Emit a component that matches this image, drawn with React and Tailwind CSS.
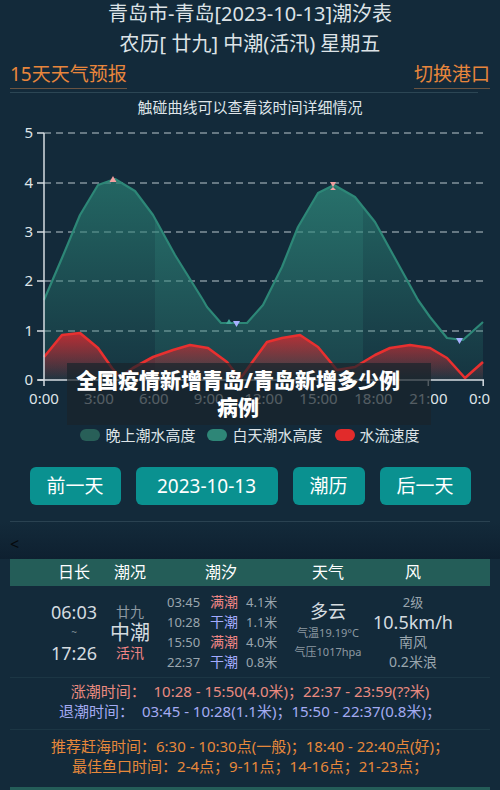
import React from 'react';

const tide = [
    [44, 300], [62, 258], [80, 215], [98, 185], [115, 179], [135, 191], [153, 215], [175, 255],
    [203, 300], [207, 307], [221, 323], [247, 323], [263, 305], [282, 267], [298, 227], [318, 193],
    [334, 185], [355, 197], [375, 222], [407, 280], [418, 300], [430, 317], [447, 338], [463, 340], [483, 322],
];

const flow = [
    [44, 357], [62, 335], [80, 333], [98, 348], [112, 368], [120, 377], [133, 368], [153, 357],
    [173, 350], [190, 345], [208, 348], [227, 362], [240, 379], [267, 342], [282, 338], [300, 335],
    [318, 347], [337, 370], [355, 367], [375, 355], [390, 348], [410, 345], [430, 348], [447, 358],
    [465, 378], [483, 362],
];

const line = (pts) => pts.map((p, i) => `${i ? 'L' : 'M'}${p[0]},${p[1]}`).join(' ');
const area = (pts) => `${line(pts)} L${pts[pts.length - 1][0]},380 L${pts[0][0]},380 Z`;

const yTicks = [[5, 133], [4, 183], [3, 232], [2, 281], [1, 331], [0, 380]];
const xTicks = ['0:00', '3:00', '6:00', '9:00', '12:00', '15:00', '18:00', '21:00'];

const TideChart = () => (
    <svg width="500" height="291" viewBox="0 121 500 291" className="block">
        <defs>
            <linearGradient id="tideFill" x1="0" y1="180" x2="0" y2="380" gradientUnits="userSpaceOnUse">
                <stop offset="0" stopColor="#2a8074" stopOpacity="0.7" />
                <stop offset="1" stopColor="#2a8074" stopOpacity="0.12" />
            </linearGradient>
            <linearGradient id="dayFill" x1="0" y1="180" x2="0" y2="380" gradientUnits="userSpaceOnUse">
                <stop offset="0" stopColor="#2f8a7c" stopOpacity="0.75" />
                <stop offset="1" stopColor="#2f8a7c" stopOpacity="0.25" />
            </linearGradient>
            <linearGradient id="flowFill" x1="0" y1="333" x2="0" y2="380" gradientUnits="userSpaceOnUse">
                <stop offset="0" stopColor="#d42a30" stopOpacity="0.85" />
                <stop offset="1" stopColor="#d42a30" stopOpacity="0.05" />
            </linearGradient>
            <clipPath id="night">
                <rect x="0" y="0" width="155" height="400" />
                <rect x="363" y="0" width="137" height="400" />
            </clipPath>
            <clipPath id="day">
                <rect x="155" y="0" width="208" height="400" />
            </clipPath>
        </defs>

        {/* grid */}
        {yTicks.slice(0, 5).map(([v, y]) => (
            <line key={v} x1="44" x2="484" y1={y} y2={y} stroke="#b9c5cc" strokeWidth="1.2" strokeDasharray="7 5" />
        ))}

        {/* tide area */}
        <path d={area(tide)} fill="url(#tideFill)" clipPath="url(#night)" />
        <path d={area(tide)} fill="url(#dayFill)" clipPath="url(#day)" />
        <path d={line(tide)} fill="none" stroke="#2d8777" strokeWidth="2.2" strokeLinejoin="round" />

        {/* flow area */}
        <path d={area(flow)} fill="url(#flowFill)" />
        <path d={line(flow)} fill="none" stroke="#e8302f" strokeWidth="2.6" strokeLinejoin="round" />

        {/* markers */}
        <path d="M113,176 L116.5,182 L109.5,182 Z" fill="#f2a0a0" />
        <path d="M330,182 L336,182 L333,187 L336,190 L330,190 L333,187 Z" fill="#f2a0a0" />
        <path d="M229,319 L232,324 L226,324 Z" fill="#3fa595" />
        <path d="M233,321 L240,321 L236.5,327 Z" fill="#a7b0ff" />
        <path d="M456,338 L463,338 L459.5,344 Z" fill="#a7b0ff" />

        {/* axes */}
        <line x1="44" x2="44" y1="133" y2="380" stroke="#d6dde2" strokeWidth="1.5" />
        <line x1="38" x2="484" y1="380" y2="380" stroke="#d6dde2" strokeWidth="1.5" />
        {yTicks.map(([v, y]) => (
            <g key={v}>
                <line x1="37" x2="44" y1={y} y2={y} stroke="#d6dde2" strokeWidth="1.5" />
                <text x="33" y={y + 5} textAnchor="end" fontSize="15" fill="#dfe5e9">{v}</text>
            </g>
        ))}
        {[...xTicks, '0:0'].map((t, i) => {
            const x = 44 + i * 54.9;
            return (
                <g key={i}>
                    <line x1={x} x2={x} y1="380" y2="386" stroke="#d6dde2" strokeWidth="1.5" />
                    <text x={i === 8 ? 469 : x} y="404" textAnchor={i === 8 ? 'start' : 'middle'} fontSize="15" fill="#dfe5e9">{t}</text>
                </g>
            );
        })}
    </svg>
);

const TideRow = ({ time, kind, height }) => (
    <div className="h-[20px] flex items-center text-[13px] leading-[20px]">
        <span className="w-[36px] text-[#9aa6ae]">{time}</span>
        <span className={`ml-[7px] text-[14px] ${kind === '满潮' ? 'text-[#f08585]' : 'text-[#a3abff]'}`}>{kind}</span>
        <span className="ml-[8px] text-[13px] text-[#9aa6ae]">{height}</span>
    </div>
);

const App = () => {
    return (
        <div className="w-[500px] h-[790px] overflow-hidden bg-[#132a3a] text-[#e1e6ea] font-['Noto_Sans','Noto_Sans_CJK_SC',sans-serif]">
            {/* header */}
            <div className="h-[27px] leading-[27px] text-center text-[20px] text-[#dde3e7]">青岛市-青岛[2023-10-13]潮汐表</div>
            <div className="h-[33px] leading-[33px] text-center text-[20px] text-[#dde3e7]">农历[ 廿九] 中潮(活汛) 星期五</div>
            <div className="flex justify-between px-[10px] h-[29px]">
                <span className="text-[19px] leading-[28px] text-[#e8863c] border-b border-[#6b5442]">15天天气预报</span>
                <span className="text-[19px] leading-[28px] text-[#e8863c] border-b border-[#6b5442]">切换港口</span>
            </div>
            <div className="mt-[3px] ml-[10px] mr-[22px] h-px bg-[#2c4654]" />
            <div className="h-[28px] leading-[28px] text-center text-[15px] text-[#dfe5e9]">触碰曲线可以查看该时间详细情况</div>

            {/* chart */}
            <div className="relative">
                <TideChart />
                <div className="absolute left-[67px] top-[242px] w-[364px] h-[62px] bg-[#1a232b]/70 flex items-center">
                    <div className="w-[330px] ml-[6px] text-center text-[21px] leading-[27px] font-extrabold text-white">全国疫情新增青岛/青岛新增多少例病例</div>
                </div>
            </div>

            {/* legend */}
            <div className="mt-[14px] h-[18px] flex items-center justify-center text-[15px] text-[#dce2e6]">
                <span className="w-[20px] h-[12px] rounded-full bg-[#285f58]" />
                <span className="ml-[5px]">晚上潮水高度</span>
                <span className="ml-[12px] w-[20px] h-[12px] rounded-full bg-[#2e8677]" />
                <span className="ml-[5px]">白天潮水高度</span>
                <span className="ml-[12px] w-[20px] h-[12px] rounded-full bg-[#e12b2b]" />
                <span className="ml-[5px]">水流速度</span>
            </div>

            {/* buttons */}
            <div className="mt-[23px] flex justify-center gap-[15px] text-[19px] text-white">
                <button className="w-[91px] h-[38px] rounded-[6px] bg-[#0a9190]">前一天</button>
                <button className="w-[142px] h-[38px] rounded-[6px] bg-[#0a9190]">2023-10-13</button>
                <button className="w-[72px] h-[38px] rounded-[6px] bg-[#0a9190]">潮历</button>
                <button className="w-[91px] h-[38px] rounded-[6px] bg-[#0a9190]">后一天</button>
            </div>

            <div className="mt-[16px] mx-[10px] h-px bg-[#2a4251]" />

            <div className="h-[37px] bg-gradient-to-b from-[#132a3a] to-[#0e2030] px-[10px] pt-[10px] text-[16px] text-[#05090c]">&lt;</div>

            {/* table */}
            <div className="mx-[10px]">
                <div className="h-[27px] bg-[#245d58] flex pl-[30px] text-[16px] leading-[27px] text-white">
                    <div className="w-[68px] text-center">日长</div>
                    <div className="w-[44px] text-center">潮况</div>
                    <div className="w-[138px] text-center">潮汐</div>
                    <div className="w-[76px] text-center">天气</div>
                    <div className="w-[94px] text-center">风</div>
                </div>

                <div className="h-[92px] flex pl-[30px] border-b border-[#1c3644]">
                    <div className="w-[68px] pt-[14px] flex flex-col items-center text-[#d5dce0]">
                        <div className="h-[24px] leading-[24px] text-[18px]">06:03</div>
                        <div className="h-[17px] leading-[17px] text-[10px] text-[#7d8a93]">~</div>
                        <div className="h-[24px] leading-[24px] text-[18px]">17:26</div>
                    </div>
                    <div className="w-[44px] pt-[16px] flex flex-col items-center">
                        <div className="h-[20px] leading-[20px] text-[14px] text-[#8d99a2]">廿九</div>
                        <div className="h-[21px] leading-[21px] text-[20px] text-[#d5dce0]">中潮</div>
                        <div className="h-[20px] leading-[20px] text-[14px] text-[#f08585]">活汛</div>
                    </div>
                    <div className="w-[138px] pt-[6px] pl-[15px]">
                        <TideRow time="03:45" kind="满潮" height="4.1米" />
                        <TideRow time="10:28" kind="干潮" height="1.1米" />
                        <TideRow time="15:50" kind="满潮" height="4.0米" />
                        <TideRow time="22:37" kind="干潮" height="0.8米" />
                    </div>
                    <div className="w-[76px] pt-[12px] flex flex-col items-center">
                        <div className="h-[26px] leading-[26px] text-[18px] text-[#d5dce0]">多云</div>
                        <div className="h-[18px] leading-[18px] text-[11px] text-[#8d99a2] whitespace-nowrap">气温19.19°C</div>
                        <div className="h-[20px] leading-[20px] text-[11px] text-[#8d99a2] whitespace-nowrap">气压1017hpa</div>
                    </div>
                    <div className="w-[94px] pt-[6px] flex flex-col items-center text-[#9aa6ae]">
                        <div className="h-[20px] leading-[20px] text-[13px]">2级</div>
                        <div className="h-[20px] leading-[20px] text-[18px] text-[#d5dce0]">10.5km/h</div>
                        <div className="h-[20px] leading-[20px] text-[14px]">南风</div>
                        <div className="h-[20px] leading-[20px] text-[14px]">0.2米浪</div>
                    </div>
                </div>

                <div className="pt-[3px] pb-[8px] border-b border-[#1c3644] text-[15px] leading-[20px] text-center whitespace-pre">
                    <div className="text-[#ea8a80]">涨潮时间：  10:28 - 15:50(4.0米)；22:37 - 23:59(??米)</div>
                    <div className="text-[#a4abf2]">退潮时间：  03:45 - 10:28(1.1米)；15:50 - 22:37(0.8米)；</div>
                </div>

                <div className="pt-[6px] text-[15px] leading-[20px] text-center text-[#e6883a] whitespace-pre">
                    <div>推荐赶海时间：6:30 - 10:30点(一般)；18:40 - 22:40点(好)；</div>
                    <div>最佳鱼口时间：2-4点；9-11点；14-16点；21-23点；</div>
                </div>

                <div className="mt-[11px] h-[4px] bg-[#245d58]" />
            </div>
        </div>
    );
};

export default App;
